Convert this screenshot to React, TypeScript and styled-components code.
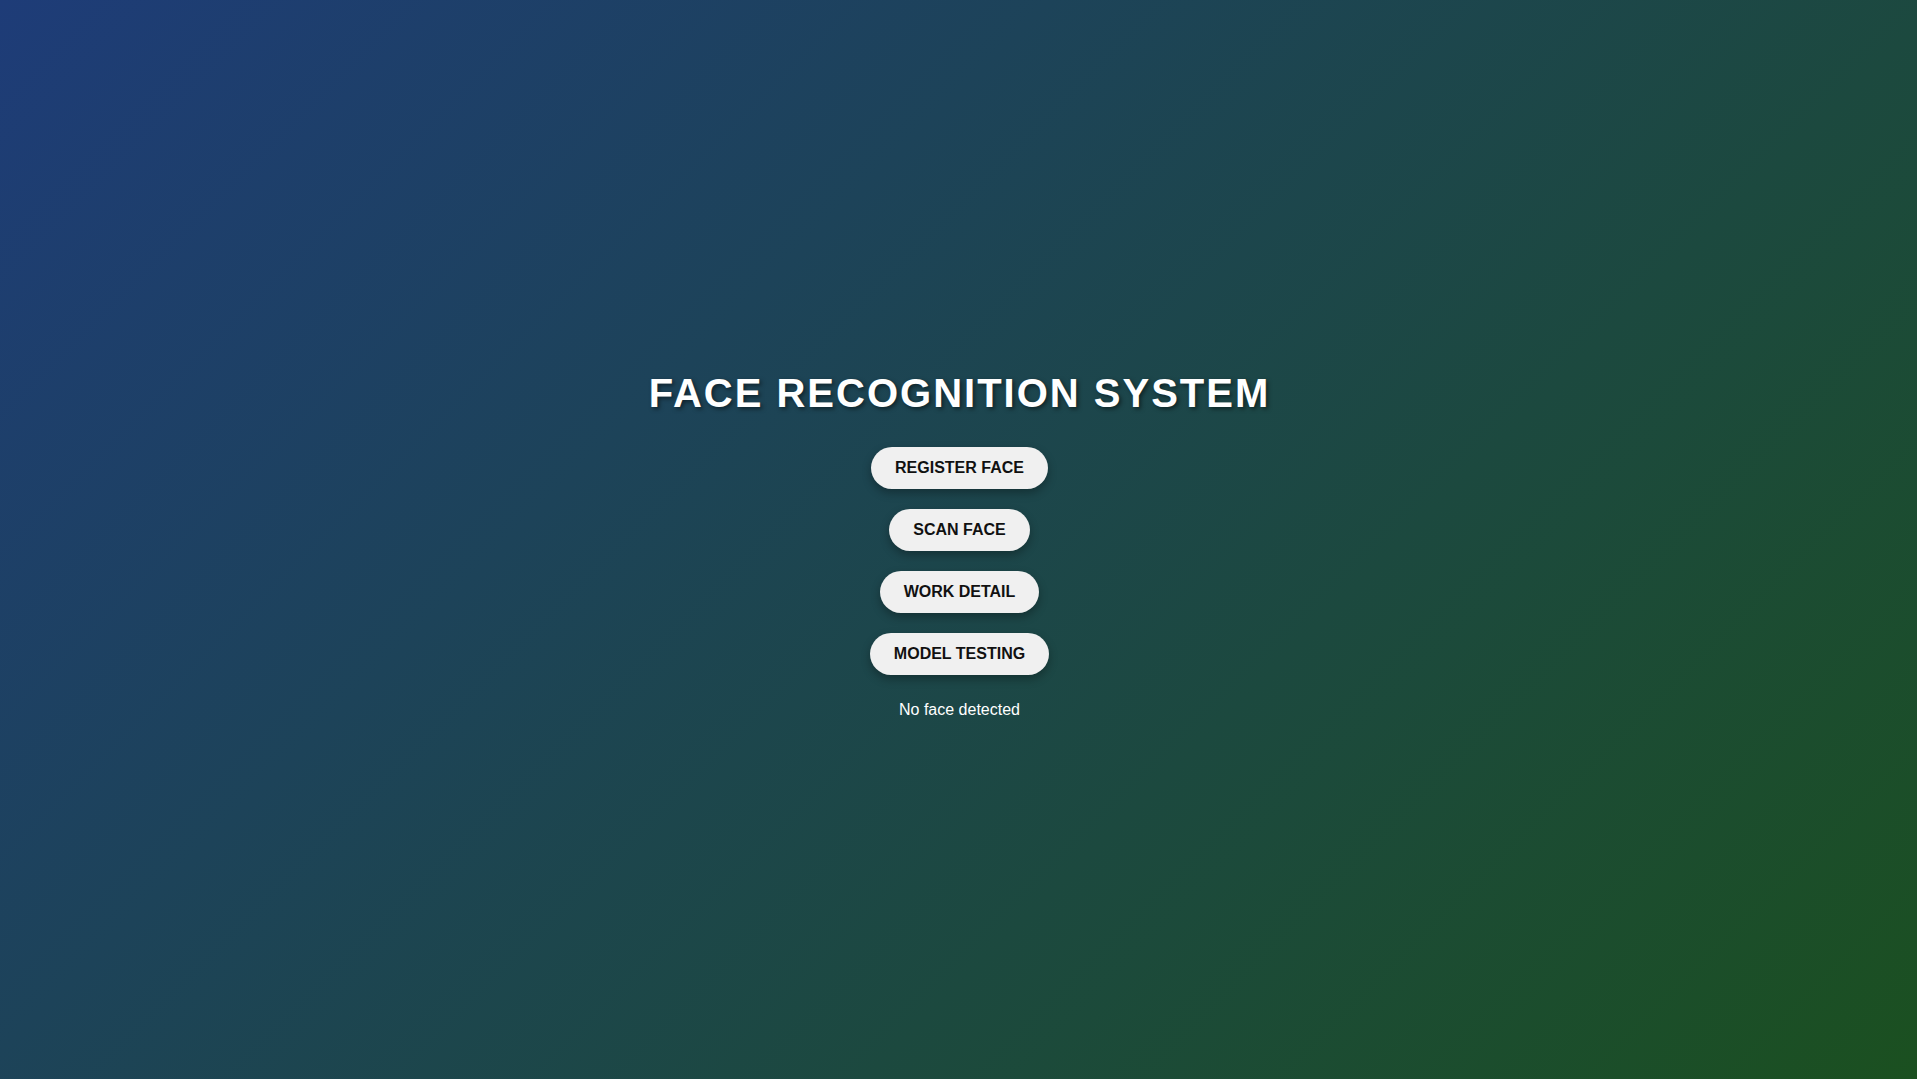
import React from "react";
import styled, { createGlobalStyle } from "styled-components";

const GlobalStyle = createGlobalStyle`
  html, body {
    margin: 0;
    padding: 0;
  }
  body {
    font-family: "Liberation Sans", Arial, Helvetica, sans-serif;
  }
`;

const Page = styled.div`
  min-height: 100vh;
  box-sizing: border-box;
  padding: 9px 0 0 2px;
  display: flex;
  flex-direction: column;
  align-items: center;
  justify-content: center;
  background: linear-gradient(135deg, #1e3c78 0%, #1b5020 100%);
  color: #ffffff;
`;

const Title = styled.h1`
  margin: 0 0 31px;
  font-size: 40px;
  line-height: 46px;
  font-weight: 700;
  letter-spacing: 2px;
  color: #ffffff;
  text-shadow: 2px 2px 4px rgba(0, 0, 0, 0.5);
`;

const ButtonStack = styled.div`
  display: flex;
  flex-direction: column;
  align-items: center;
  gap: 20px;
`;

const ActionButton = styled.button`
  font-family: "Liberation Sans", Arial, Helvetica, sans-serif;
  font-size: 16px;
  line-height: 18px;
  font-weight: 700;
  color: #111111;
  background: #f0f0f0;
  border: none;
  border-radius: 30px;
  padding: 12px 24px;
  box-shadow: 0 4px 10px rgba(0, 0, 0, 0.3);
  cursor: pointer;
`;

const Status = styled.p`
  margin: 26px 0 0;
  font-size: 16px;
  line-height: 18px;
  color: #ffffff;
`;

const actions = ["REGISTER FACE", "SCAN FACE", "WORK DETAIL", "MODEL TESTING"];

export default function App() {
  return (
    <>
      <GlobalStyle />
      <Page>
        <Title>FACE RECOGNITION SYSTEM</Title>
        <ButtonStack>
          {actions.map((a) => (
            <ActionButton key={a}>{a}</ActionButton>
          ))}
        </ButtonStack>
        <Status>No face detected</Status>
      </Page>
    </>
  );
}
